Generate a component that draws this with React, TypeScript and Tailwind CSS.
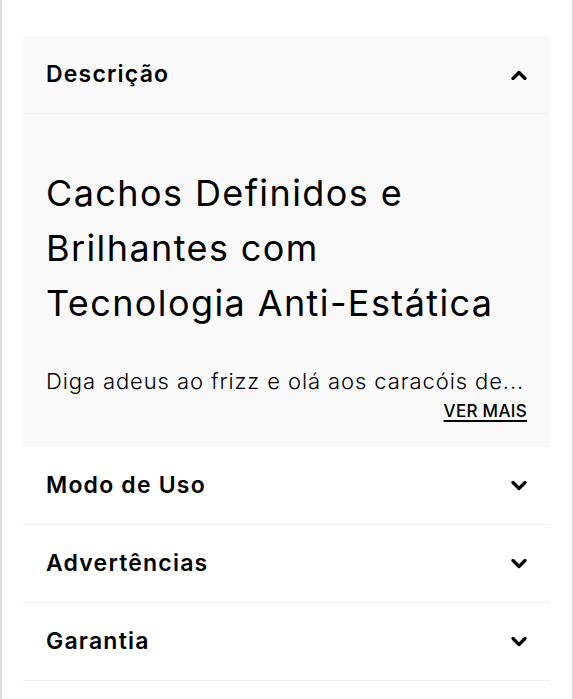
import React from "react";

function Chevron({ up }: { up?: boolean }) {
  return (
    <svg width="16" height="10" viewBox="0 0 16 10" className="shrink-0">
      <polyline
        points={up ? "2,8.5 8,2.5 14,8.5" : "2,1.5 8,7.5 14,1.5"}
        fill="none"
        stroke="#000"
        strokeWidth="3.2"
        strokeLinecap="round"
        strokeLinejoin="round"
      />
    </svg>
  );
}

function Row({ title }: { title: string }) {
  return (
    <div className="flex h-[78px] items-center justify-between border-b border-[#eeeeee] pl-[23px] pr-[23px]">
      <span className="text-[23px] font-semibold tracking-[1.2px] text-black">{title}</span>
      <Chevron />
    </div>
  );
}

export default function App() {
  return (
    <div
      className="min-h-[699px] w-[573px] border-l-2 border-r border-[#dcdcdc] bg-white pl-[21px] pr-[22px] pt-[36px]"
      style={{ fontFamily: "Inter, 'Noto Sans', sans-serif" }}
    >
      <div className="bg-[#f9f9f9]">
        <div className="flex h-[78px] items-center justify-between border-b border-[#f0f0f0] pl-[23px] pr-[23px]">
          <span className="text-[23px] font-semibold tracking-[1.2px] text-black">Descrição</span>
          <Chevron up />
        </div>
        <div className="pb-[24px] pl-[23px] pr-[23px] pt-[52px]">
          <h2 className="whitespace-nowrap text-[36px] font-normal leading-[55px] tracking-[1.4px] text-black">
            Cachos Definidos e<br />
            Brilhantes com<br />
            Tecnologia Anti-Estática
          </h2>
          <p className="mt-[35px] whitespace-nowrap text-[22px] font-light leading-[30px] tracking-[0.9px] text-black">
            Diga adeus ao frizz e olá aos caracóis de...
          </p>
          <div className="mt-[3px] flex justify-end">
            <span className="text-[17px] font-medium leading-[24px] tracking-[0.3px] text-black underline decoration-[1.5px] underline-offset-[3px]">
              VER MAIS
            </span>
          </div>
        </div>
      </div>
      <Row title="Modo de Uso" />
      <Row title="Advertências" />
      <Row title="Garantia" />
    </div>
  );
}
